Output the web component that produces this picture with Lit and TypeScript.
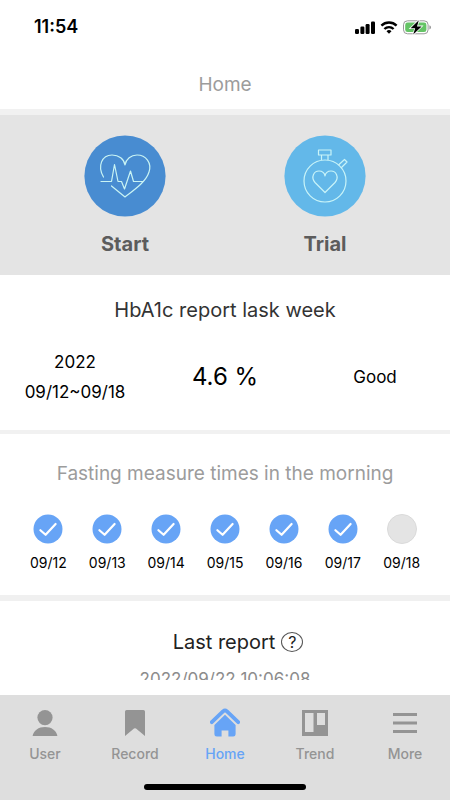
import { LitElement, html, css, svg, nothing } from "lit";
import { customElement, property } from "lit/decorators.js";
import { classMap } from "lit/directives/class-map.js";

const tabs = [
  {
    label: "User",
    icon: svg`<circle cx="15" cy="9.6" r="7.6"/><path d="M2.6 28C3.600 22.400 8.600 19 15 19S26.400 22.400 27.400 28Z"/>`,
  },
  {
    label: "Record",
    icon: svg`<path d="M6.6 2H23.4A1.6 1.6 0 0 1 25 3.6V28L16 20.6Q15 19.8 14 20.6L5 28V3.6A1.6 1.6 0 0 1 6.6 2Z"/>`,
  },
  {
    label: "Home",
    active: true,
    icon: svg`<path d="M1.8 14.2L13 3.4Q15 1.7 17 3.4L28.2 14.2" fill="none" stroke="currentColor" stroke-width="3.8" stroke-linecap="round" stroke-linejoin="round"/><path d="M15 6.8L25.6 17V26.2Q25.6 28.6 23.2 28.6H18.4V22.4H11.6V28.6H6.8Q4.4 28.6 4.4 26.2V17Z"/>`,
  },
  {
    label: "Trend",
    icon: svg`<path fill-rule="evenodd" d="M2 2H28V28H2ZM5 5V24H13.5V5ZM17 5V17H25V5Z"/>`,
  },
  {
    label: "More",
    icon: svg`<path d="M3 5H27V8H3ZM3 13.5H27V16.5H3ZM3 22H27V25H3Z"/>`,
  },
];

@customElement("status-bar")
class StatusBar extends LitElement {
  static styles = css`
    :host {
      display: flex;
      justify-content: space-between;
      align-items: center;
      height: 54px;
      padding: 0 18px 0 34px;
      box-sizing: border-box;
    }
    .time {
      font-size: 18px;
      font-weight: 600;
      line-height: 22px;
      color: #000;
    }
    .icons {
      display: block;
      width: 80px;
      height: 16px;
    }
  `;
  render() {
    return html`
      <span class="time">11:54</span>
      <svg class="icons" viewBox="0 0 80 16" aria-hidden="true">
        <rect x="3" y="10" width="4" height="5" rx="1.2" />
        <rect x="8.4" y="7.6" width="4" height="7.4" rx="1.2" />
        <rect x="13.6" y="5" width="4" height="10" rx="1.2" />
        <rect x="19" y="2.4" width="4" height="12.6" rx="1.2" />
        <g fill="none" stroke="#000" stroke-width="2.4">
          <path d="M29.4 6.6A11 11 0 0 1 44.6 6.6" />
          <path d="M32.4 10A6.6 6.6 0 0 1 41.6 10" />
        </g>
        <path d="M37 14.8L34.5 12.2A3.8 3.8 0 0 1 39.5 12.2Z" />
        <rect x="51.5" y="1.8" width="24.6" height="13" rx="4" fill="none" stroke="#999" />
        <rect x="53.2" y="3.5" width="21.2" height="9.6" rx="2.4" fill="#65c466" />
        <path d="M77.4 6.2Q79 6.6 79 8.3T77.4 10.4Z" fill="#999" />
        <path d="M66.8 1.2L58.6 9.2H63.2L61.2 15.6L69.6 7.4H65Z" stroke="#fff" stroke-width="1.6" paint-order="stroke" />
      </svg>
    `;
  }
}

@customElement("day-mark")
class DayMark extends LitElement {
  @property() date = "";
  @property({ type: Boolean }) done = false;
  static styles = css`
    :host {
      display: flex;
      flex: 1;
      flex-direction: column;
      align-items: center;
      gap: 9px;
    }
    .disc {
      display: block;
      width: 30px;
      height: 30px;
    }
    .fill {
      fill: #e4e4e4;
      stroke: #dadada;
    }
    .fill.done {
      fill: #67a4f6;
      stroke: none;
    }
    .date {
      font-size: 14px;
      line-height: 20px;
      color: #000;
    }
  `;
  render() {
    return html`
      <svg class="disc" viewBox="0 0 30 30" aria-hidden="true">
        <circle class=${classMap({ fill: true, done: this.done })} cx="15" cy="15" r="14.5" />
        ${this.done
          ? svg`<path d="M7.4 16.2L12.6 20.8L22.6 10" fill="none" stroke="#fff" stroke-width="2.2" stroke-linecap="round" stroke-linejoin="round"/>`
          : nothing}
      </svg>
      <span class="date">${this.date}</span>
    `;
  }
}

@customElement("app-root")
class AppRoot extends LitElement {
  static styles = css`
    :host {
      display: flex;
      flex-direction: column;
      height: 100vh;
      background: #fff;
      font-family: Inter, "Liberation Sans", sans-serif;
      color: #000;
    }
    h1,
    h2 {
      margin: 0;
      font-weight: 400;
      text-align: center;
    }
    .title {
      padding: 19px 0 12px;
      font-size: 19px;
      line-height: 24px;
      color: #9c9c9c;
    }
    main {
      flex: 1;
      min-height: 0;
      overflow: hidden;
    }
    .actions {
      display: flex;
      border-top: 6px solid #f1f1f1;
      padding: 0 25px;
      background: #e4e4e4;
    }
    .action {
      flex: 1;
      display: flex;
      flex-direction: column;
      align-items: center;
      gap: 15px;
      padding: 20px 0 19px;
      border: 0;
      background: none;
      font-family: inherit;
      font-size: 20px;
      font-weight: 700;
      line-height: 24px;
      color: #5c5c5c;
    }
    .badge {
      display: block;
      width: 82px;
      height: 82px;
    }
    .heading {
      font-size: 20px;
      line-height: 24px;
    }
    .report {
      padding: 23px 0;
    }
    .report .heading {
      color: #333;
    }
    .row {
      display: grid;
      grid-template-columns: repeat(3, 1fr);
      align-items: center;
      margin-top: 25px;
      text-align: center;
      font-size: 17px;
      line-height: 30px;
    }
    .value {
      font-size: 24px;
    }
    .fasting {
      border-top: 4px solid #f1f1f1;
      padding: 28px 19px 22px;
    }
    .fasting .heading {
      font-size: 19px;
      color: #9c9c9c;
    }
    .days {
      display: flex;
      margin-top: 28px;
    }
    .last {
      border-top: 6px solid #f0f0f0;
      padding-top: 29px;
      text-align: center;
    }
    .last .heading {
      display: flex;
      justify-content: center;
      align-items: center;
      gap: 6px;
      padding-left: 26px;
      color: #222;
    }
    .help {
      display: block;
      padding: 0;
      background: none;
      color: inherit;
      font: inherit;
      font-size: 16px;
      line-height: 18px;
      width: 22px;
      height: 20px;
      border: 1px solid #555;
      border-radius: 50%;
    }
    .stamp {
      margin: 13px 0 0;
      font-size: 17px;
      line-height: 24px;
      color: #8c8c8c;
    }
    footer {
      margin-top: 15px;
      background: #dedede;
    }
    nav {
      display: flex;
    }
    .tab {
      flex: 1;
      display: flex;
      flex-direction: column;
      align-items: center;
      gap: 7px;
      padding-top: 13px;
      color: #949494;
      font-size: 14px;
      font-weight: 500;
      line-height: 18px;
      text-decoration: none;
    }
    .tab.active {
      color: #67a4f6;
    }
    .glyph {
      display: block;
      width: 30px;
      height: 30px;
      fill: currentColor;
    }
    .grip {
      width: 36%;
      height: 6px;
      margin: 21px auto 10px;
      border-radius: 3px;
      background: #000;
    }
  `;
  render() {
    const days = ["09/12", "09/13", "09/14", "09/15", "09/16", "09/17", "09/18"];
    return html`
      <status-bar></status-bar>
      <h1 class="title">Home</h1>
      <main>
        <section class="actions">
          <button class="action">
            <svg class="badge" viewBox="0 0 82 82" aria-hidden="true">
              <circle cx="41" cy="41" r="40.6" fill="#488cd1" />
              <g fill="none" stroke="#c9f4f4" stroke-width="1.2" stroke-linecap="round" stroke-linejoin="round">
                <path d="M19.5 42C13 31 18 20 28 20C35 20 40 24 41 30C42 24 47 20 53 20C62 20 68 28 65 37C62 47 50 55 41 62L27.5 51" />
                <path d="M17 46.5H27.5L30.5 29.5L34 46.5H37.5L40.5 54L46.5 36L49.5 46.5H59" />
              </g>
            </svg>
            Start
          </button>
          <button class="action">
            <svg class="badge" viewBox="0 0 82 82" aria-hidden="true">
              <circle cx="41" cy="41" r="40.6" fill="#63b8e9" />
              <g fill="none" stroke="#c9f4f8" stroke-width="1.2" stroke-linejoin="round">
                <circle cx="41" cy="46" r="21" />
                <path d="M34.5 15H47V20H34.5ZM37.5 20V25.2M44 20V25.2M54.5 30L60.5 24.5L63 27L57 33" />
                <path d="M41 57.5L31 47.5C26.5 42 30 36 35 36C38 36 40.5 38 41 41C41.5 38 44 36 47 36C52 36 55.5 42 51 47.5Z" />
              </g>
            </svg>
            Trial
          </button>
        </section>
        <section class="report">
          <h2 class="heading">HbA1c report lask week</h2>
          <div class="row">
            <div>2022<br />09/12~09/18</div>
            <div class="value">4.6 %</div>
            <div>Good</div>
          </div>
        </section>
        <section class="fasting">
          <h2 class="heading">Fasting measure times in the morning</h2>
          <div class="days">
            ${days.map((d, i) => html`<day-mark date=${d} ?done=${i < 6}></day-mark>`)}
          </div>
        </section>
        <section class="last">
          <h2 class="heading">Last report <button class="help" aria-label="Help">?</button></h2>
          <p class="stamp">2022/09/22 10:06:08</p>
        </section>
      </main>
      <footer>
        <nav>
          ${tabs.map(
            (t) => html`<a href="#" class=${classMap({ tab: true, active: !!t.active })}>
              <svg class="glyph" viewBox="0 0 30 30" aria-hidden="true">${t.icon}</svg>${t.label}
            </a>`
          )}
        </nav>
        <div class="grip"></div>
      </footer>
    `;
  }
}
